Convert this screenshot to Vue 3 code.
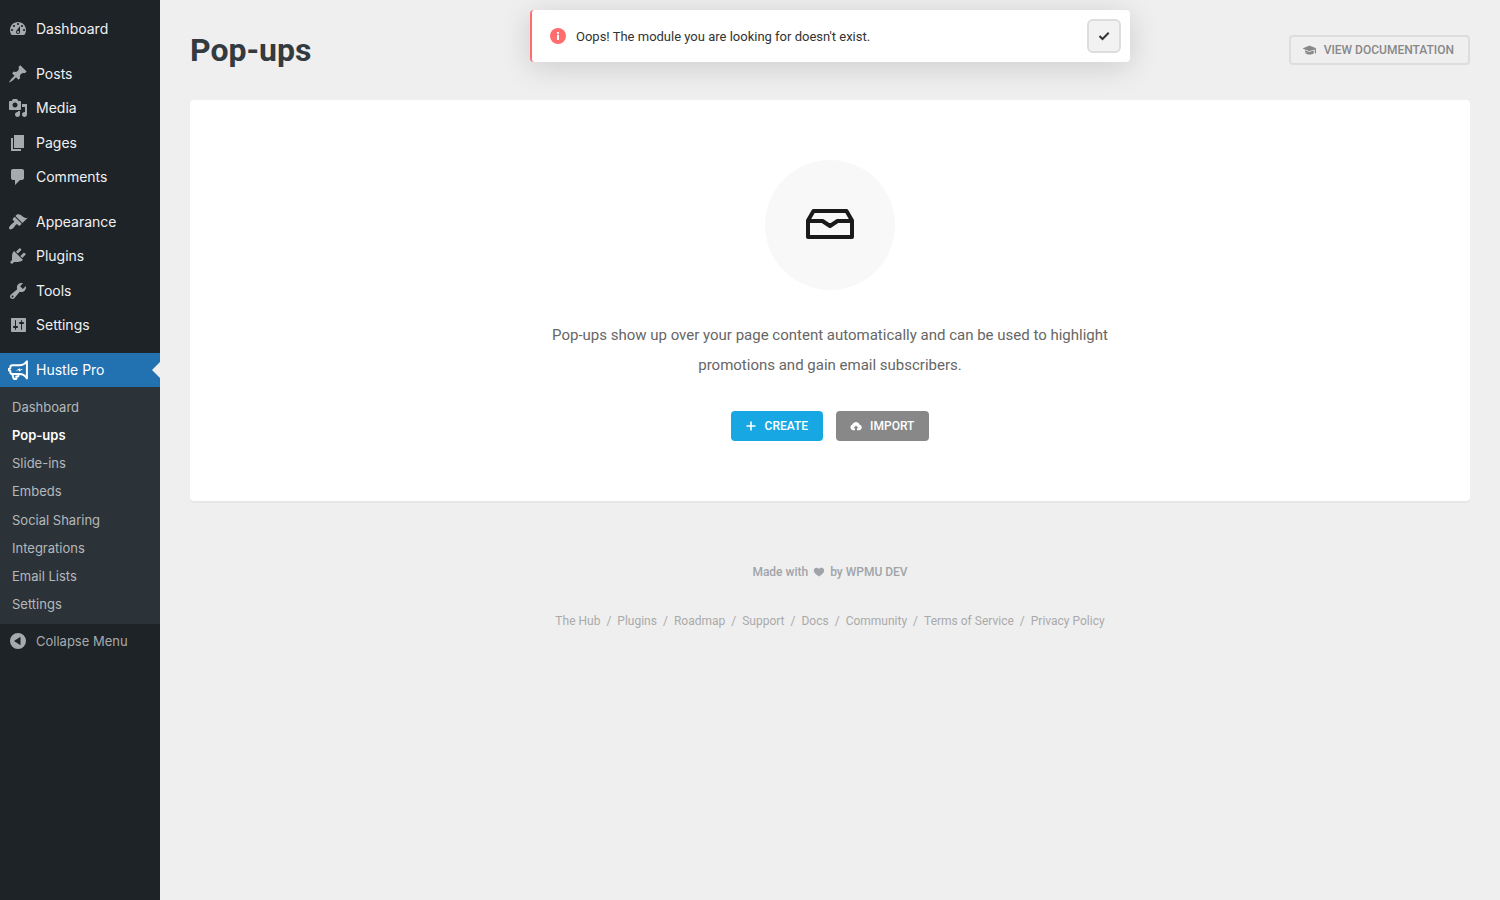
<script setup>
const menuGroups = [
  [
    {
      label: 'Dashboard',
      path: 'M3.76 16h12.48c1.1-1.37 1.76-3.11 1.76-5 0-4.42-3.58-8-8-8s-8 3.58-8 8c0 1.89.66 3.63 1.76 5zM10 4c.55 0 1 .45 1 1s-.45 1-1 1-1-.45-1-1 .45-1 1-1zM6 6c.55 0 1 .45 1 1s-.45 1-1 1-1-.45-1-1 .45-1 1-1zm8 0c.55 0 1 .45 1 1s-.45 1-1 1-1-.45-1-1 .45-1 1-1zm-5.37 5.55L12 7v6c0 1.1-.9 2-2 2s-2-.9-2-2c0-.57.24-1.08.63-1.45zM4 10c.55 0 1 .45 1 1s-.45 1-1 1-1-.45-1-1 .45-1 1-1zm12 0c.55 0 1 .45 1 1s-.45 1-1 1-1-.45-1-1 .45-1 1-1zm-5 3c0-.55-.45-1-1-1s-1 .45-1 1 .45 1 1 1 1-.45 1-1z',
    },
  ],
  [
    {
      label: 'Posts',
      path: 'M10.44 3.02l1.82-1.82 6.36 6.35-1.83 1.82c-1.05-.68-2.48-.57-3.41.36l-.75.75c-.92.93-1.04 2.35-.35 3.41l-1.83 1.82-2.41-2.41-2.8 2.79c-.42.42-3.38 2.71-3.8 2.29s1.86-3.39 2.28-3.81l2.79-2.79L4.1 9.36l1.83-1.82c1.05.69 2.48.57 3.4-.36l.75-.75c.93-.92 1.05-2.35.36-3.41z',
    },
    {
      label: 'Media',
      path: 'M13 11V4c0-.55-.45-1-1-1h-1.67L9 1H5L3.67 3H2c-.55 0-1 .45-1 1v7c0 .55.45 1 1 1h10c.55 0 1-.45 1-1zM7 4.5c1.38 0 2.5 1.12 2.5 2.5S8.38 9.5 7 9.5 4.5 8.38 4.5 7 5.62 4.5 7 4.5zM14 6h5v10.5c0 1.38-1.12 2.5-2.5 2.5S14 17.88 14 16.5s1.12-2.5 2.5-2.5c.17 0 .34.02.5.05V9h-3V6zm-4 8.05V13h2v3.5c0 1.38-1.12 2.5-2.5 2.5S7 17.88 7 16.5 8.12 14 9.5 14c.17 0 .34.02.5.05z',
    },
    { label: 'Pages', path: 'M6 15V2h10v13H6zm-1 1h8v2H3V5h2v11z' },
    {
      label: 'Comments',
      path: 'M5 2h9c1.1 0 2 .9 2 2v7c0 1.1-.9 2-2 2h-2l-5 5v-5H5c-1.1 0-2-.9-2-2V4c0-1.1.9-2 2-2z',
    },
  ],
  [
    {
      label: 'Appearance',
      path: 'M14.48 11.06L7.41 3.99l1.5-1.5c.5-.56 2.3-.47 3.51.32 1.21.8 1.43 1.28 2.91 2.1 1.18.64 2.45 1.26 4.45.85zm-.71.71L6.7 4.7 4.93 6.47c-.39.39-.39 1.02 0 1.41l1.06 1.06c.39.39.39 1.03 0 1.42-.6.6-1.43 1.11-2.21 1.69-.35.26-.7.53-1.01.84C1.43 14.23.4 16.08 1.4 17.07c.99 1 2.84-.03 4.18-1.36.31-.31.58-.66.85-1.02.57-.78 1.08-1.61 1.69-2.21.39-.39 1.02-.39 1.41 0l1.06 1.06c.39.39 1.02.39 1.41 0z',
    },
    {
      label: 'Plugins',
      path: 'M13.11 4.36L9.87 7.6 8 5.73l3.24-3.24c.35-.34 1.05-.2 1.56.32.52.51.66 1.21.31 1.55zm-8 1.77l.91-1.12 9.01 9.01-1.19.84c-.71.71-2.63 1.16-3.82 1.16H6.14L4.9 17.26c-.59.59-1.54.59-2.12 0-.59-.58-.59-1.53 0-2.12l1.24-1.24v-3.88c0-1.13.4-3.19 1.09-3.89zm7.26 3.97l3.24-3.24c.34-.35 1.04-.21 1.55.31.52.51.66 1.21.31 1.55l-3.24 3.25z',
    },
    {
      label: 'Tools',
      path: 'M16.68 9.77c-1.34 1.34-3.3 1.67-4.95.99l-5.41 6.52c-.99.99-2.59.99-3.58 0s-.99-2.59 0-3.57l6.52-5.42c-.68-1.65-.35-3.61.99-4.95 1.28-1.28 3.12-1.62 4.72-1.06l-2.89 2.89 2.82 2.82 2.86-2.87c.53 1.58.18 3.39-1.08 4.65zM3.81 16.21c.4.39 1.04.39 1.43 0 .4-.4.4-1.04 0-1.43-.39-.4-1.03-.4-1.43 0-.39.39-.39 1.03 0 1.43z',
    },
    {
      label: 'Settings',
      path: 'M18 16V4c0-.55-.45-1-1-1H4c-.55 0-1 .45-1 1v12c0 .55.45 1 1 1h13c.55 0 1-.45 1-1zM8 11h1c.55 0 1 .45 1 1s-.45 1-1 1H8v1.500c0 .28-.22.5-.5.5s-.5-.22-.5-.5V13H6c-.55 0-1-.45-1-1s.45-1 1-1h1V5.500c0-.28.22-.5.5-.5s.5.22.5.5V11zm5-2h-1c-.55 0-1-.45-1-1s.45-1 1-1h1V5.500c0-.28.22-.5.5-.5s.5.22.5.5V7h1c.55 0 1 .45 1 1s-.45 1-1 1h-1v5.500c0 .28-.22.5-.5.5s-.5-.22-.5-.5V9z',
    },
  ],
]
const subItems = ['Dashboard', 'Pop-ups', 'Slide-ins', 'Embeds', 'Social Sharing', 'Integrations', 'Email Lists', 'Settings']
const footerLinks = ['The Hub', 'Plugins', 'Roadmap', 'Support', 'Docs', 'Community', 'Terms of Service', 'Privacy Policy']
</script>

<template>
  <div class="layout">
    <nav class="sidebar" aria-label="Main menu">
      <ul v-for="(group, i) in menuGroups" :key="i" class="group" :class="{ tall: group.length > 1 }">
        <li v-for="item in group" :key="item.label">
          <a class="item" href="#">
            <svg class="menu-icon" viewBox="0 0 20 20" aria-hidden="true"><path :d="item.path" /></svg>
            <span>{{ item.label }}</span>
          </a>
        </li>
      </ul>
      <div class="group">
        <a class="item current" href="#">
          <svg class="menu-icon hustle" viewBox="0 0 20 20" aria-hidden="true">
            <path d="M18.900 1.200C17.200 3.700 14.500 5.200 11.300 5.200H4.400C3 5.200 2.300 6.100 2.300 7.300v1L.8 8.900v1.400l1.500.6v.8c0 1.300.8 2.200 2.100 2.200h6.900c3.200 0 5.900 1.300 7.600 4.500z" />
            <path d="M4.300 14l1.100 4.100c.2.700.6 1 1.200 1h.9c.8 0 1.200-.5 1-1.300l-.3-1.400h1.300c.6 0 1-.4 1-1V14" />
            <path class="bolt" d="M7.500 10.900l4.400-3-.2 1.700 3.600-.9-4.500 3 .2-1.600z" />
          </svg>
          <span>Hustle Pro</span>
        </a>
        <ul class="submenu">
          <li v-for="name in subItems" :key="name">
            <a href="#" :class="{ active: name === 'Pop-ups' }">{{ name }}</a>
          </li>
        </ul>
      </div>
      <button class="item collapse" type="button">
        <svg class="menu-icon" viewBox="0 0 20 20" aria-hidden="true">
          <path d="M10 2a8 8 0 1 0 0 16 8 8 0 0 0 0-16zm2.500 12.200L6 10l6.500-4.200z" />
        </svg>
        <span>Collapse Menu</span>
      </button>
    </nav>

    <main class="content">
      <header class="page-header">
        <h1>Pop-ups</h1>
        <a class="btn ghost" href="#">
          <svg class="cap" viewBox="0 0 13 10" aria-hidden="true">
            <path d="M0 3.200L6 .8c.4-.1.700-.1 1 0l5.500 2.200c.3.200.5.500.5.900v4.500h-1.200V4.400L7 5.900c-.4.100-.700.100-1 0L0 3.800z" />
            <path d="M2 5.300l4 1.500c.4.100.700.100 1 0l3.700-1.300v2.700C9.600 9.200 8.300 9.600 6.500 9.600 4.500 9.600 3 9 1.600 7.600l3 .2L2 6.700z" />
          </svg>
          View Documentation
        </a>
      </header>

      <section class="card">
        <div class="circle">
          <svg viewBox="0 0 48 30" aria-hidden="true">
            <path d="M2 11.500L7.500 2h33L46 11.500V28H2zM2 12h14.500l7.500 5 7.500-5H46" />
          </svg>
        </div>
        <p>Pop-ups show up over your page content automatically and can be used to highlight promotions and gain email subscribers.</p>
        <div class="actions">
          <button class="btn blue" type="button">
            <svg class="plus" viewBox="0 0 12 12" aria-hidden="true"><path d="M5.200 1.500h1.600v3.700h3.700v1.600H6.800v3.700H5.200V6.800H1.500V5.200h3.700z" /></svg>
            Create
          </button>
          <button class="btn gray" type="button">
            <svg class="cloud" viewBox="0 0 12 12" aria-hidden="true">
              <path d="M9.700 4.700A3.900 3.900 0 0 0 2.300 4.600 2.900 2.900 0 0 0 3 10.200h2V8.300H3.400L6 5.400l2.600 2.900H7v1.900h2.200a2.800 2.800 0 0 0 .5-5.500z" />
            </svg>
            Import
          </button>
        </div>
      </section>

      <footer>
        <div class="made">
          Made with
          <svg viewBox="0 0 12 10" aria-hidden="true">
            <path d="M6 9.500C4.500 8.600 1.600 6.500 1 4.800.4 3.200 1 1.500 2.300.9 3.700.3 5.200.8 6 2 6.800.8 8.300.3 9.700.9 11 1.500 11.600 3.200 11 4.800c-.6 1.700-3.500 3.800-5 4.700z" />
          </svg>
          by WPMU DEV
        </div>
        <ul class="links">
          <li v-for="link in footerLinks" :key="link"><a href="#">{{ link }}</a></li>
        </ul>
      </footer>
    </main>

    <div class="notice-wrap">
      <div class="notice" role="alert">
        <svg class="info" viewBox="0 0 16 16" aria-hidden="true">
          <circle cx="8" cy="8" r="8" />
          <path d="M7 6.800h2V12H7zM7 4h2v1.800H7z" />
        </svg>
        <span>Oops! The module you are looking for doesn't exist.</span>
        <button type="button" aria-label="Dismiss">
          <svg viewBox="0 0 12 10" aria-hidden="true"><path d="M1.500 5l3 3 6.200-6.200" /></svg>
        </button>
      </div>
    </div>
  </div>
</template>

<style>
body {
  background: #efefef;
}
</style>

<style scoped>
.layout {
  display: flex;
  min-height: 100vh;
  position: relative;
  font-family: Roboto, "Liberation Sans", sans-serif;
  background: #efefef;
}
.layout * {
  box-sizing: border-box;
}
a {
  text-decoration: none;
}
ul {
  list-style: none;
  margin: 0;
  padding: 0;
}
.sidebar {
  flex: 0 0 160px;
  display: flex;
  flex-direction: column;
  padding-top: 12px;
  background: #1d2327;
  font-family: Inter, "Liberation Sans", sans-serif;
}
.group + .group {
  margin-top: 11px;
}
.tall {
  display: flex;
  flex-direction: column;
  justify-content: space-between;
  min-height: 137px;
}
.item {
  display: flex;
  align-items: center;
  gap: 8px;
  width: 100%;
  height: 34px;
  padding: 0 8px;
  color: #f0f0f1;
  font-size: 14px;
}
.item span {
  line-height: 18px;
}
.menu-icon {
  width: 20px;
  height: 20px;
  flex: none;
  fill: #a7aaad;
  fill-rule: evenodd;
}
.current {
  position: relative;
  background: #2271b1;
  color: #fff;
}
.current::after {
  content: "";
  position: absolute;
  right: 0;
  top: 9px;
  border: 8px solid transparent;
  border-left-width: 0;
  border-right-color: #efefef;
}
.hustle {
  fill: none;
  stroke: #fff;
  stroke-width: 2;
  stroke-linejoin: round;
}
.hustle .bolt {
  fill: #fff;
  stroke: none;
}
.submenu {
  display: flex;
  flex-direction: column;
  justify-content: space-between;
  min-height: 237px;
  padding: 6px 0;
  background: #2c3338;
}
.submenu a {
  display: block;
  padding: 0 12px;
  line-height: 28px;
  font-size: 13px;
  color: #b5b8bb;
}
.submenu .active {
  color: #fff;
  font-weight: 600;
}
.collapse {
  border: 0;
  background: none;
  color: #a7aaad;
  font-family: inherit;
  font-size: 13px;
  text-align: left;
}
.content {
  flex: 1;
  min-width: 0;
  padding: 0 30px;
}
.page-header {
  display: flex;
  align-items: center;
  justify-content: space-between;
  height: 100px;
}
h1 {
  margin: 0;
  font-size: 32px;
  line-height: 40px;
  font-weight: 700;
  color: #333b40;
}
.btn {
  display: flex;
  align-items: center;
  gap: 8px;
  height: 30px;
  padding: 0 15px 0 14px;
  border: 0;
  border-radius: 4px;
  color: #fff;
  font-family: inherit;
  font-size: 12px;
  font-weight: 500;
  text-transform: uppercase;
}
.btn svg {
  fill: currentColor;
}
.ghost {
  padding: 0 14px 0 12px;
  border: 2px solid #ddd;
  color: #888;
}
.cap {
  width: 13px;
  height: 10px;
}
.plus,
.cloud {
  width: 12px;
  height: 12px;
}
.blue {
  background: #17a8e3;
}
.gray {
  background: #888;
}
.card {
  display: flex;
  flex-direction: column;
  align-items: center;
  padding: 60px 30px;
  border-radius: 4px;
  background: #fff;
  box-shadow: 0 2px 0 #e6e6e6;
}
.circle {
  display: flex;
  align-items: center;
  justify-content: center;
  width: 130px;
  height: 130px;
  margin-bottom: 30px;
  padding-bottom: 2px;
  border-radius: 50%;
  background: #f8f8f8;
}
.circle svg {
  width: 48px;
  height: 30px;
  fill: none;
  stroke: #1a1a1a;
  stroke-width: 4;
  stroke-linejoin: round;
}
p {
  max-width: 600px;
  margin: 0 0 31px;
  font-size: 15px;
  line-height: 30px;
  text-align: center;
  color: #666;
}
.actions {
  display: flex;
  gap: 13px;
}
footer {
  display: flex;
  flex-direction: column;
  align-items: center;
  gap: 29px;
  padding-top: 61px;
  color: #a0a4a9;
  font-size: 12px;
  line-height: 20px;
}
.made {
  display: flex;
  align-items: center;
  gap: 5px;
  font-weight: 500;
}
.made svg {
  width: 12px;
  height: 10px;
  fill: currentColor;
}
.links {
  display: flex;
  flex-wrap: wrap;
  justify-content: center;
}
.links a {
  color: #aaa;
}
.links li + li::before {
  content: "/";
  margin: 0 6px;
  color: #aaa;
}
.notice-wrap {
  position: absolute;
  top: 10px;
  left: 160px;
  right: 0;
  display: flex;
  justify-content: center;
  pointer-events: none;
}
.notice {
  display: flex;
  align-items: center;
  width: 100%;
  max-width: 600px;
  height: 52px;
  padding: 0 9px 0 18px;
  border-left: 2px solid #ff6d6d;
  border-radius: 4px;
  background: #fff;
  box-shadow: 0 5px 30px rgba(0, 0, 0, 0.15);
  color: #333;
  font-size: 13px;
  pointer-events: auto;
}
.info {
  width: 16px;
  height: 16px;
  margin-right: 10px;
  fill: #ff6d6d;
}
.info path {
  fill: #fff;
}
.notice button {
  display: flex;
  align-items: center;
  justify-content: center;
  width: 34px;
  height: 34px;
  margin-left: auto;
  padding: 0;
  border: 2px solid #ddd;
  border-radius: 6px;
  background: #f2f2f2;
}
.notice button svg {
  width: 12px;
  height: 10px;
  fill: none;
  stroke: #333;
  stroke-width: 2;
}
</style>
